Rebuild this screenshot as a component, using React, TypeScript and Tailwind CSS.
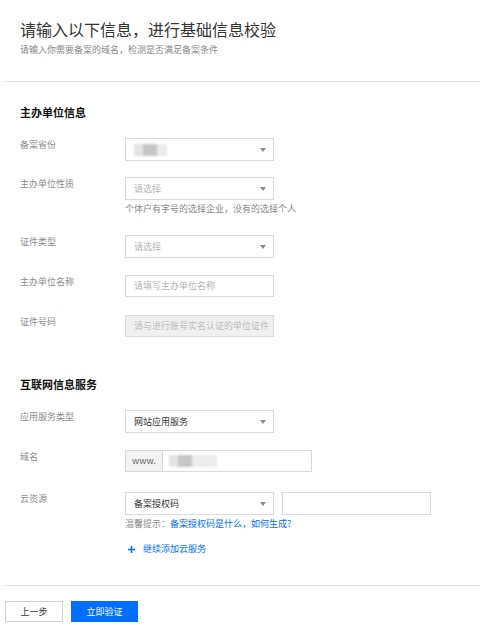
import React from "react";

const font = { fontFamily: '"Noto Sans CJK SC", "Noto Sans", sans-serif' };

function Caret() {
  return (
    <svg width="6" height="4" viewBox="0 0 6 4" className="shrink-0">
      <path d="M0 0h6L3 4z" fill="#8a8a8a" />
    </svg>
  );
}

function Blur({ w }: { w: number }) {
  return (
    <div className="flex h-[12px] blur-[1px]" style={{ width: w }}>
      <div className="h-full w-[9px] bg-[#e4e4e4]" />
      <div className="h-full w-[14px] bg-[#c6c6c6]" />
      <div className="h-full flex-1 bg-[#ececec]" />
    </div>
  );
}

function Row({
  label,
  mt,
  children,
}: {
  label: string;
  mt: string;
  children: React.ReactNode;
}) {
  return (
    <div className={`flex ${mt}`}>
      <div className="w-[125px] shrink-0 pl-[20px] pt-[1px] text-[9px] leading-[12px] text-[#8c8c8c]">
        {label}
      </div>
      <div className="flex flex-col">{children}</div>
    </div>
  );
}

function Select({ value, placeholder }: { value?: React.ReactNode; placeholder?: string }) {
  return (
    <div className="box-border flex h-[23px] w-[149px] items-center justify-between border border-[#d9d9d9] bg-white pl-[8px] pr-[7px]">
      {value ?? <span className="text-[9px] text-[#b5b5b5]">{placeholder}</span>}
      <Caret />
    </div>
  );
}

export default function App() {
  return (
    <div className="h-[636px] w-[480px] overflow-hidden bg-white" style={font}>
      <div className="pl-[20px] pt-[20px]">
        <div className="text-[16px] leading-[18px] text-[#333]">请输入以下信息，进行基础信息校验</div>
        <div className="mt-[6px] text-[9px] leading-[12px] text-[#888]">
          请输入你需要备案的域名，检测是否满足备案条件
        </div>
      </div>
      <div className="ml-[5px] mt-[25px] border-t border-[#e5e5e5]" />

      <div className="mt-[23px] pl-[20px] text-[11px] font-bold leading-[14px] text-[#111]">主办单位信息</div>

      <Row label="备案省份" mt="mt-[19px]">
        <Select value={<Blur w={33} />} />
      </Row>
      <Row label="主办单位性质" mt="mt-[16px]">
        <Select placeholder="请选择" />
        <div className="mt-[3px] text-[9px] leading-[12px] text-[#888]">个体户有字号的选择企业，没有的选择个人</div>
      </Row>
      <Row label="证件类型" mt="mt-[20px]">
        <Select placeholder="请选择" />
      </Row>
      <Row label="主办单位名称" mt="mt-[17px]">
        <div className="box-border flex h-[22px] w-[149px] items-center border border-[#d9d9d9] pl-[8px] text-[9px] text-[#b5b5b5]">
          请填写主办单位名称
        </div>
      </Row>
      <Row label="证件号码" mt="mt-[18px]">
        <div className="box-border flex h-[22px] w-[149px] items-center overflow-hidden whitespace-nowrap border border-[#dcdcdc] bg-[#f0f0f0] pl-[8px] text-[9px] text-[#bdbdbd]">
          请与进行账号实名认证的单位证件
        </div>
      </Row>

      <div className="mt-[40px] pl-[20px] text-[11px] font-bold leading-[14px] text-[#111]">互联网信息服务</div>

      <Row label="应用服务类型" mt="mt-[19px]">
        <Select value={<span className="text-[9px] text-[#333]">网站应用服务</span>} />
      </Row>
      <Row label="域名" mt="mt-[17px]">
        <div className="box-border flex h-[22px] w-[187px] border border-[#d9d9d9]">
          <div className="flex w-[37px] items-center justify-center border-r border-[#d9d9d9] bg-[#f2f2f2] text-[9px] text-[#666]">
            www.
          </div>
          <div className="flex items-center pl-[6px]">
            <Blur w={48} />
          </div>
        </div>
      </Row>
      <Row label="云资源" mt="mt-[20px]">
        <div className="flex gap-[8px]">
          <Select value={<span className="text-[9px] text-[#333]">备案授权码</span>} />
          <div className="box-border h-[23px] w-[149px] border border-[#d9d9d9]" />
        </div>
        <div className="mt-[3px] text-[9px] leading-[12px] text-[#888]">
          温馨提示：<span className="text-[#006eff]">备案授权码是什么，如何生成?</span>
        </div>
        <div className="mt-[13px] flex items-center gap-[8px] pl-[3px] text-[9px] leading-[12px] text-[#006eff]">
          <svg width="7" height="7" viewBox="0 0 7 7">
            <path d="M3.5 0v7M0 3.5h7" stroke="#006eff" strokeWidth="1.6" />
          </svg>
          继续添加云服务
        </div>
      </Row>

      <div className="ml-[5px] mt-[30px] border-t border-[#e5e5e5]" />
      <div className="ml-[5px] mt-[15px] flex gap-[8px]">
        <button className="box-border h-[21px] w-[58px] border border-[#cfcfcf] bg-white text-[9px] text-[#333]">
          上一步
        </button>
        <button className="h-[21px] w-[67px] bg-[#006eff] text-[9px] text-white">立即验证</button>
      </div>
    </div>
  );
}
